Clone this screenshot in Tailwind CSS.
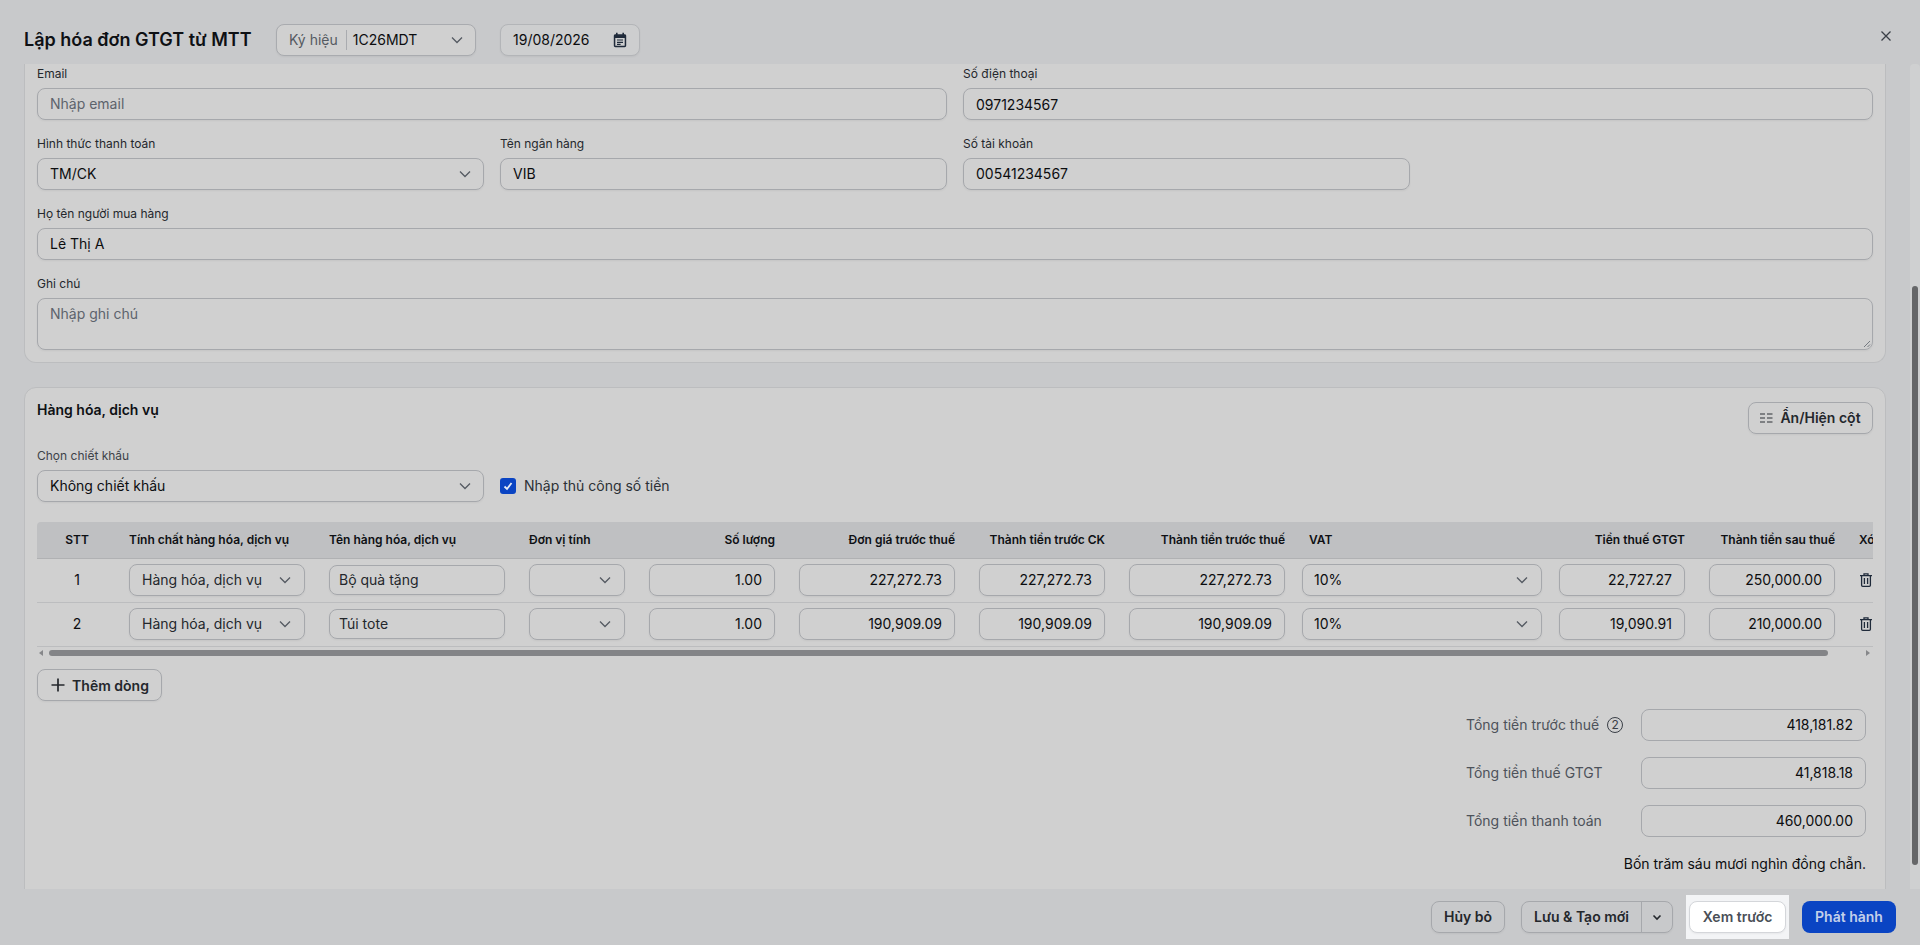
<!DOCTYPE html>
<html lang="vi">

<head>
    <meta charset="UTF-8" />
    <meta name="viewport" content="width=device-width, initial-scale=1" />
    <title>Lập hóa đơn GTGT từ MTT</title>
    <script src="https://cdn.jsdelivr.net/npm/@tailwindcss/browser@4"></script>
</head>

<body class="font-['Inter',sans-serif] text-sm text-[#0c0d0f] bg-[#c8c9cb]">
  <div class="h-[945px] w-[1920px] flex flex-col overflow-hidden relative">

    <!-- Header -->
    <header class="h-16 shrink-0 flex items-start pl-6 pt-6 relative">
      <h1 class="text-lg leading-8 font-semibold text-[#0e1014] w-[252px]">Lập hóa đơn GTGT từ MTT</h1>
      <div class="h-8 w-[200px] flex items-center rounded-lg border border-[#a9abaf] bg-[#d0d0d0] pl-3 pr-[10px] shadow-xs">
        <span class="text-[#555a62] pr-2 border-r border-[#a9abaf] leading-5">Ký hiệu</span>
        <span class="pl-1.5 flex-1">1C26MDT</span>
        <svg class="w-4 h-4 text-[#555a62]" viewBox="0 0 16 16" fill="none" stroke="currentColor" stroke-width="1.3"><path d="M3 5.5 8 10.5 13 5.5"/></svg>
      </div>
      <div class="ml-6 h-8 w-[140px] flex items-center justify-between rounded-lg border border-[#b3b5b8] bg-[#cdcecf] pl-3 pr-[11px] shadow-xs">
        <span>19/08/2026</span>
        <svg class="w-4 h-4 text-[#1f2a3a]" viewBox="0 0 16 16" fill="currentColor"><path fill-rule="evenodd" d="M4 .8h1.6v1.4h4.8V.8H12v1.4h.6c.9 0 1.6.7 1.6 1.6v9.8c0 .9-.7 1.6-1.6 1.6H3.4c-.9 0-1.6-.7-1.6-1.6V3.8c0-.9.7-1.6 1.6-1.6H4zM3.3 6v7.6c0 .1 0 .1.1.1h9.2c.1 0 .1 0 .1-.1V6zM5 7.4h6v1.2H5zm0 2.3h6v1.2H5zm0 2.1h3.6V13H5z"/></svg>
      </div>
      <svg class="absolute left-[1880px] top-[30px] w-3 h-3 text-[#3a3f47]" viewBox="0 0 12 12" fill="none" stroke="currentColor" stroke-width="1.3"><path d="M1.5 1.5 10.5 10.5M10.5 1.5 1.5 10.5"/></svg>
    </header>

    <!-- Body -->
    <div class="flex-1 min-h-0 flex">
      <div class="flex-1 min-w-0 px-6 overflow-hidden">

        <!-- Card: buyer details (scrolled, its top is out of view) -->
        <section class="border border-t-0 border-[#bcbdbf] rounded-b-xl bg-[#d0d0d0] px-3 pt-0.5 h-[299px]">
          <div class="grid grid-cols-4 gap-x-4 gap-y-4">
            <div class="col-span-2">
              <div class="text-xs leading-4 mb-1.5 text-[#24272c]">Email</div>
              <div class="h-8 rounded-lg border border-[#a6a8ac] px-3 pb-px flex items-center text-[#5d636c] shadow-xs">Nhập email</div>
            </div>
            <div class="col-span-2">
              <div class="text-xs leading-4 mb-1.5 text-[#24272c]">Số điện thoại</div>
              <div class="h-8 rounded-lg border border-[#a6a8ac] px-3 pt-px flex items-center shadow-xs">0971234567</div>
            </div>
            <div>
              <div class="text-xs leading-4 mb-1.5 text-[#24272c]">Hình thức thanh toán</div>
              <div class="h-8 rounded-lg border border-[#a6a8ac] pl-3 pr-[10px] flex items-center justify-between shadow-xs">
                <span>TM/CK</span>
                <svg class="w-4 h-4 text-[#555a62]" viewBox="0 0 16 16" fill="none" stroke="currentColor" stroke-width="1.3"><path d="M3 5.5 8 10.5 13 5.5"/></svg>
              </div>
            </div>
            <div>
              <div class="text-xs leading-4 mb-1.5 text-[#24272c]">Tên ngân hàng</div>
              <div class="h-8 rounded-lg border border-[#a6a8ac] px-3 flex items-center shadow-xs">VIB</div>
            </div>
            <div>
              <div class="text-xs leading-4 mb-1.5 text-[#24272c]">Số tài khoản</div>
              <div class="h-8 rounded-lg border border-[#a6a8ac] px-3 flex items-center shadow-xs">00541234567</div>
            </div>
            <div></div>
            <div class="col-span-4">
              <div class="text-xs leading-4 mb-1.5 text-[#24272c]">Họ tên người mua hàng</div>
              <div class="h-8 rounded-lg border border-[#a6a8ac] px-3 flex items-center shadow-xs">Lê Thị A</div>
            </div>
            <div class="col-span-4">
              <div class="text-xs leading-4 mb-1.5 text-[#24272c]">Ghi chú</div>
              <div class="h-[52px] rounded-lg border border-[#a6a8ac] px-3 pt-[5px] text-[#5d636c] shadow-xs relative">
                Nhập ghi chú
                <svg class="absolute right-px bottom-px w-2 h-2 text-[#5d636c]" viewBox="0 0 8 8" fill="none" stroke="currentColor" stroke-width="0.8"><path d="M1 7 7 1M4.5 7 7 4.5"/></svg>
              </div>
            </div>
          </div>
        </section>

        <!-- Card: goods and services -->
        <section class="mt-6 border border-[#bcbdbf] rounded-xl bg-[#d0d0d0] px-3 pt-3.5 h-[560px]">
          <div class="flex items-start justify-between h-8">
            <h2 class="font-semibold text-sm leading-4 text-[#0e1014]">Hàng hóa, dịch vụ</h2>
            <button class="h-8 w-[125px] rounded-lg border border-[#a6a8ac] pr-0.5 flex items-center justify-center gap-1.5 font-semibold text-sm text-[#24272c] shadow-xs">
              <svg class="w-4 h-4 text-[#2c3036]" viewBox="0 0 16 16" fill="none" stroke="currentColor" stroke-width="1"><path d="M2 4h5M2 8h5M2 12h5M9 4h5.5M9 8h5.5M9 12h5.5"/></svg>
              Ẩn/Hiện cột
            </button>
          </div>

          <div class="mt-3.5 text-xs leading-4 mb-1.5 text-[#3d4249]">Chọn chiết khấu</div>
          <div class="flex items-center gap-4">
            <div class="w-[447px] h-8 rounded-lg border border-[#a6a8ac] pl-3 pr-[10px] flex items-center justify-between shadow-xs">
              <span>Không chiết khấu</span>
              <svg class="w-4 h-4 text-[#555a62]" viewBox="0 0 16 16" fill="none" stroke="currentColor" stroke-width="1.3"><path d="M3 5.5 8 10.5 13 5.5"/></svg>
            </div>
            <label class="flex items-center gap-2 text-[#2c3036]">
              <span class="w-4 h-4 rounded-[3px] bg-[#0a44c3] flex items-center justify-center">
                <svg class="w-3 h-3 text-[#e6ebf5]" viewBox="0 0 12 12" fill="none" stroke="currentColor" stroke-width="1.8"><path d="M2.5 6.5 5 9 9.5 3"/></svg>
              </span>
              Nhập thủ công số tiền
            </label>
          </div>

          <!-- Table -->
          <div class="mt-5 overflow-hidden">
            <table class="table-fixed w-[1890px] border-collapse">
              <thead>
                <tr class="h-[36px] bg-[#bfc0c2] border-b border-[#b0b1b3] text-xs font-semibold text-[#0e1014]">
                  <th class="w-[80px] text-center font-semibold rounded-tl-sm">STT</th>
                  <th class="w-[200px] px-3 text-left font-semibold whitespace-nowrap">Tính chất hàng hóa, dịch vụ</th>
                  <th class="w-[200px] px-3 text-left font-semibold">Tên hàng hóa, dịch vụ</th>
                  <th class="w-[120px] px-3 text-left font-semibold">Đơn vị tính</th>
                  <th class="w-[150px] px-3 text-right font-semibold">Số lượng</th>
                  <th class="w-[180px] px-3 text-right font-semibold">Đơn giá trước thuế</th>
                  <th class="w-[150px] px-3 text-right font-semibold whitespace-nowrap">Thành tiền trước CK</th>
                  <th class="w-[180px] px-3 text-right font-semibold">Thành tiền trước thuế</th>
                  <th class="w-[250px] px-3 text-left font-semibold">VAT</th>
                  <th class="w-[150px] px-3 text-right font-semibold">Tiền thuế GTGT</th>
                  <th class="w-[150px] px-3 text-right font-semibold">Thành tiền sau thuế</th>
                  <th class="w-[80px] px-3 text-left font-semibold">Xóa</th>
                </tr>
              </thead>
              <tbody>
                <tr class="h-[44px] border-b border-[#bcbdbf]">
                  <td class="text-center">1</td>
                  <td class="px-3"><div class="h-8 rounded-lg border border-[#a6a8ac] pl-3 pr-[11px] flex items-center justify-between text-[#24272c] shadow-xs"><span>Hàng hóa, dịch vụ</span><svg class="w-4 h-4 text-[#555a62]" viewBox="0 0 16 16" fill="none" stroke="currentColor" stroke-width="1.3"><path d="M3 5.5 8 10.5 13 5.5"/></svg></div></td>
                  <td class="px-3"><div class="h-[30px] rounded-lg border border-[#a6a8ac] px-[9px] flex items-center text-[#24272c] shadow-xs">Bộ quà tặng</div></td>
                  <td class="px-3"><div class="h-8 rounded-lg border border-[#a6a8ac] pr-[11px] flex items-center justify-end shadow-xs"><svg class="w-4 h-4 text-[#555a62]" viewBox="0 0 16 16" fill="none" stroke="currentColor" stroke-width="1.3"><path d="M3 5.5 8 10.5 13 5.5"/></svg></div></td>
                  <td class="px-3"><div class="h-8 rounded-lg border border-[#a6a8ac] px-3 flex items-center justify-end shadow-xs">1.00</div></td>
                  <td class="px-3"><div class="h-8 rounded-lg border border-[#a6a8ac] px-3 flex items-center justify-end shadow-xs">227,272.73</div></td>
                  <td class="px-3"><div class="h-8 rounded-lg border border-[#a6a8ac] px-3 flex items-center justify-end shadow-xs">227,272.73</div></td>
                  <td class="px-3"><div class="h-8 rounded-lg border border-[#a6a8ac] px-3 flex items-center justify-end shadow-xs">227,272.73</div></td>
                  <td class="px-[5px]"><div class="h-8 rounded-lg border border-[#a6a8ac] pl-[11px] pr-[11px] flex items-center justify-between shadow-xs"><span>10%</span><svg class="w-4 h-4 text-[#555a62]" viewBox="0 0 16 16" fill="none" stroke="currentColor" stroke-width="1.3"><path d="M3 5.5 8 10.5 13 5.5"/></svg></div></td>
                  <td class="px-3"><div class="h-8 rounded-lg border border-[#a6a8ac] px-3 flex items-center justify-end shadow-xs">22,727.27</div></td>
                  <td class="px-3"><div class="h-8 rounded-lg border border-[#a6a8ac] px-3 flex items-center justify-end shadow-xs">250,000.00</div></td>
                  <td class="pl-[11px]"><svg class="w-4 h-4 text-[#1f2a3a]" viewBox="0 0 16 16" fill="none" stroke="currentColor" stroke-width="1.3"><path d="M2 3.6h12M6 3.4V1.9h4v1.5M3.6 3.8v9.4c0 .7.4 1.1 1.1 1.1h6.6c.7 0 1.1-.4 1.1-1.1V3.8M6.4 6v6M9.6 6v6"/></svg></td>
                </tr>
                <tr class="h-[44px] border-b border-[#bcbdbf]">
                  <td class="text-center">2</td>
                  <td class="px-3"><div class="h-8 rounded-lg border border-[#a6a8ac] pl-3 pr-[11px] flex items-center justify-between text-[#24272c] shadow-xs"><span>Hàng hóa, dịch vụ</span><svg class="w-4 h-4 text-[#555a62]" viewBox="0 0 16 16" fill="none" stroke="currentColor" stroke-width="1.3"><path d="M3 5.5 8 10.5 13 5.5"/></svg></div></td>
                  <td class="px-3"><div class="h-[30px] rounded-lg border border-[#a6a8ac] px-[9px] flex items-center text-[#24272c] shadow-xs">Túi tote</div></td>
                  <td class="px-3"><div class="h-8 rounded-lg border border-[#a6a8ac] pr-[11px] flex items-center justify-end shadow-xs"><svg class="w-4 h-4 text-[#555a62]" viewBox="0 0 16 16" fill="none" stroke="currentColor" stroke-width="1.3"><path d="M3 5.5 8 10.5 13 5.5"/></svg></div></td>
                  <td class="px-3"><div class="h-8 rounded-lg border border-[#a6a8ac] px-3 flex items-center justify-end shadow-xs">1.00</div></td>
                  <td class="px-3"><div class="h-8 rounded-lg border border-[#a6a8ac] px-3 flex items-center justify-end shadow-xs">190,909.09</div></td>
                  <td class="px-3"><div class="h-8 rounded-lg border border-[#a6a8ac] px-3 flex items-center justify-end shadow-xs">190,909.09</div></td>
                  <td class="px-3"><div class="h-8 rounded-lg border border-[#a6a8ac] px-3 flex items-center justify-end shadow-xs">190,909.09</div></td>
                  <td class="px-[5px]"><div class="h-8 rounded-lg border border-[#a6a8ac] pl-[11px] pr-[11px] flex items-center justify-between shadow-xs"><span>10%</span><svg class="w-4 h-4 text-[#555a62]" viewBox="0 0 16 16" fill="none" stroke="currentColor" stroke-width="1.3"><path d="M3 5.5 8 10.5 13 5.5"/></svg></div></td>
                  <td class="px-3"><div class="h-8 rounded-lg border border-[#a6a8ac] px-3 flex items-center justify-end shadow-xs">19,090.91</div></td>
                  <td class="px-3"><div class="h-8 rounded-lg border border-[#a6a8ac] px-3 flex items-center justify-end shadow-xs">210,000.00</div></td>
                  <td class="pl-[11px]"><svg class="w-4 h-4 text-[#1f2a3a]" viewBox="0 0 16 16" fill="none" stroke="currentColor" stroke-width="1.3"><path d="M2 3.6h12M6 3.4V1.9h4v1.5M3.6 3.8v9.4c0 .7.4 1.1 1.1 1.1h6.6c.7 0 1.1-.4 1.1-1.1V3.8M6.4 6v6M9.6 6v6"/></svg></td>
                </tr>
              </tbody>
            </table>
          </div>

          <!-- Horizontal scrollbar -->
          <div class="h-[10px] flex items-center gap-[3px] pl-[2px] pr-[3px] mt-px">
            <span class="w-0 h-0 border-y-[3.5px] border-y-transparent border-r-[4px] border-r-[#86878a]"></span>
            <div class="flex-1 h-[10px] flex items-center pl-[3px] pr-[35px]"><div class="w-full h-1.5 rounded-full bg-[#838487]"></div></div>
            <span class="w-0 h-0 border-y-[3.5px] border-y-transparent border-l-[4px] border-l-[#86878a]"></span>
          </div>

          <button class="mt-[11px] h-8 w-[125px] rounded-lg border border-[#a6a8ac] pt-0.5 flex items-center justify-center gap-1.5 font-semibold text-sm text-[#24272c] shadow-xs">
            <svg class="w-4 h-4 -mt-0.5" viewBox="0 0 16 16" fill="none" stroke="currentColor" stroke-width="1.7"><path d="M8 1.5v13M1.5 8h13"/></svg>
            Thêm dòng
          </button>

          <!-- Totals -->
          <div class="mt-2 pr-[7px] flex flex-col items-end gap-4">
            <div class="flex items-center">
              <div class="w-[175px] flex items-center text-[#4d525a]">Tổng tiền trước thuế
                <span class="ml-2 w-4 h-4 rounded-full border border-[#3a3f47] flex items-center justify-center text-xs leading-none text-[#3a3f47]">2</span>
              </div>
              <div class="w-[225px] h-8 rounded-lg border border-[#a6a8ac] px-3 flex items-center justify-end">418,181.82</div>
            </div>
            <div class="flex items-center">
              <div class="w-[175px] text-[#4d525a]">Tổng tiền thuế GTGT</div>
              <div class="w-[225px] h-8 rounded-lg border border-[#a6a8ac] px-3 flex items-center justify-end">41,818.18</div>
            </div>
            <div class="flex items-center">
              <div class="w-[175px] text-[#4d525a]">Tổng tiền thanh toán</div>
              <div class="w-[225px] h-8 rounded-lg border border-[#a6a8ac] px-3 flex items-center justify-end">460,000.00</div>
            </div>
          </div>
          <div class="pr-[7px] mt-[17px] text-right">Bốn trăm sáu mươi nghìn đồng chẵn.</div>
        </section>
      </div>

      <!-- Vertical scrollbar -->
      <div class="w-[10px] shrink-0 bg-[#cfd0d1] rounded-t-sm pl-0.5 pr-0.5 pt-[222px]">
        <div class="h-[579px] w-1.5 rounded-full bg-[#666769]"></div>
      </div>
    </div>

    <!-- Footer -->
    <footer class="h-14 shrink-0 flex items-start justify-end gap-4 pr-6 pt-3 font-semibold text-sm">
      <button class="h-8 w-[74px] rounded-lg border border-[#a6a8ac] text-[#24272c] shadow-xs">Hủy bỏ</button>
      <div class="h-8 w-[152px] rounded-lg border border-[#a6a8ac] flex items-center text-[#24272c] shadow-xs">
        <span class="flex-1 text-center">Lưu &amp; Tạo mới</span>
        <span class="w-[31px] h-full border-l border-[#a6a8ac] flex items-center justify-center">
          <svg class="w-3.5 h-3.5" viewBox="0 0 14 14" fill="none" stroke="currentColor" stroke-width="1.6"><path d="M3.5 5.5 7 9l3.5-3.5"/></svg>
        </span>
      </div>
      <!-- tour spotlight around this one button -->
      <div class="-mx-[3px] -my-[6px] px-[3px] py-[6px] bg-[#f3f4f6]">
        <button class="h-8 w-[97px] rounded-lg border border-[#d4d6da] bg-white text-[#4a4f57] shadow-xs">Xem trước</button>
      </div>
      <button class="h-8 w-[94px] rounded-lg bg-[#0a44c3] text-[#c3d0ea]">Phát hành</button>
    </footer>
  </div>
</body>

</html>
